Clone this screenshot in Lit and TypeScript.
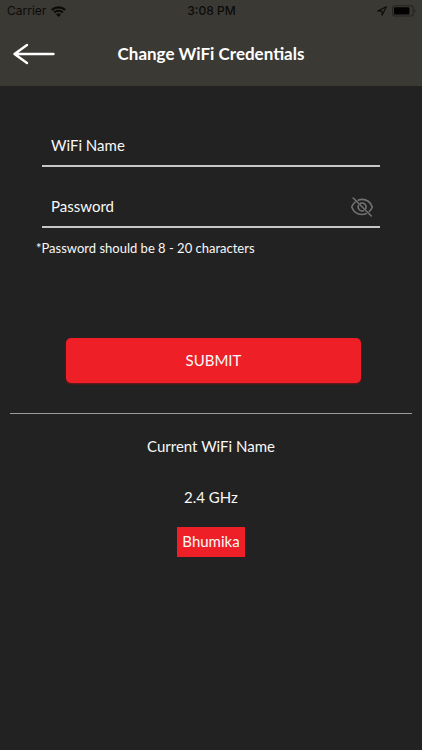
import { LitElement, html, css } from "lit";
import { customElement, state } from "lit/decorators.js";

@customElement("status-bar")
class StatusBar extends LitElement {
  static styles = css`
    :host {
      display: grid;
      grid-template-columns: 1fr auto 1fr;
      align-items: center;
      height: 22px;
      padding: 0 6px 0 7px;
      color: #0b0b0a;
      font: 12px/22px Inter, "Liberation Sans", sans-serif;
    }
    .left,
    .right {
      display: flex;
      align-items: center;
      gap: 5px;
    }
    .right {
      justify-content: flex-end;
    }
    .time {
      font-weight: 500;
    }
    svg {
      display: block;
    }
  `;

  render() {
    return html`
      <div class="left">
        <span>Carrier</span>
        <svg width="15" height="11" viewBox="0 0 15 11" fill="none" stroke="currentColor" stroke-width="2.2" aria-hidden="true">
          <path d="M0.8 4A9.6 9.6 0 0 1 14.2 4" />
          <path d="M3.2 6.5A6.1 6.1 0 0 1 11.8 6.5" />
          <path d="M7.5 11 5.1 8.5A3.4 3.4 0 0 1 9.9 8.5Z" fill="currentColor" stroke="none" />
        </svg>
      </div>
      <span class="time">3:08 PM</span>
      <div class="right">
        <svg width="10" height="10" viewBox="0 0 10 10" fill="none" stroke="currentColor" stroke-width="1.1" stroke-linejoin="round" aria-hidden="true">
          <path d="M9.3 0.7 0.7 4.9 4.9 5.1 5.1 9.3Z" />
        </svg>
        <svg width="24" height="12" viewBox="0 0 24 12" aria-hidden="true">
          <rect x="0.6" y="0.8" width="20.6" height="10.2" rx="2.6" fill="none" stroke="#252421" stroke-width="1.1" />
          <rect x="2" y="2.2" width="15.4" height="7.4" rx="1.2" fill="#020202" />
          <path d="M22.3 4.2Q23.6 4.8 23.6 6T22.3 7.8Z" fill="#252421" />
        </svg>
      </div>
    `;
  }
}

@customElement("app-root")
class AppRoot extends LitElement {
  @state() private passwordShown = false;

  static styles = css`
    :host {
      display: block;
      min-height: 100vh;
      background: #222222;
      color: #f8f8f8;
      font: 15px/20px Lato, "Noto Sans", sans-serif;
    }
    header {
      background: #3b3934;
      height: 86px;
    }
    .bar {
      display: grid;
      grid-template-columns: 44px 1fr 44px;
      align-items: center;
      height: 64px;
      padding: 0 12px;
    }
    h1 {
      margin: 0;
      font-size: 17px;
      line-height: 24px;
      font-weight: 700;
      text-align: center;
      color: #ffffff;
    }
    button {
      border: 0;
      padding: 0;
      background: none;
      color: inherit;
      font: inherit;
      cursor: pointer;
    }
    svg {
      display: block;
    }
    form {
      padding: 40px 42px 30px;
    }
    .field {
      display: flex;
      align-items: center;
      height: 39px;
      border-bottom: 2px solid #c8c6c8;
      padding: 0 6px 0 9px;
    }
    .field + .field {
      margin-top: 20px;
    }
    input {
      flex: 1;
      min-width: 0;
      border: 0;
      padding: 0 0 2px;
      outline: 0;
      background: none;
      color: inherit;
      font: inherit;
    }
    input::placeholder {
      color: inherit;
      opacity: 1;
    }
    .eye {
      color: #727272;
    }
    .hint {
      margin: 10px -6px 0;
      font-size: 13px;
    }
    .submit {
      display: block;
      width: calc(100% - 43px);
      height: 45px;
      margin: 80px 19px 0 24px;
      padding-bottom: 2px;
      border-radius: 5px;
      background: #ef1f27;
      box-shadow: 0 1px 2px #7a1418;
    }
    .current {
      display: flex;
      flex-direction: column;
      align-items: center;
      margin: 0 10px;
      padding-top: 22px;
      border-top: 1px solid #9a9a9a;
    }
    h2,
    .band {
      margin: 0;
      font: inherit;
    }
    .band {
      margin-top: 31px;
    }
    .network {
      margin-top: 20px;
      padding: 4px 5px 6px;
      background: #ef1f27;
    }
  `;

  private togglePassword() {
    this.passwordShown = !this.passwordShown;
  }

  render() {
    return html`
      <header>
        <status-bar></status-bar>
        <div class="bar">
          <button type="button" aria-label="Back">
            <svg width="44" height="22" viewBox="0 0 44 22" fill="none" stroke="#ffffff" stroke-width="2.4" stroke-linecap="round" stroke-linejoin="round">
              <path d="M41.5 11H2.5M15 2 2.5 11 15 20" />
            </svg>
          </button>
          <h1>Change WiFi Credentials</h1>
        </div>
      </header>
      <main>
        <form @submit=${(e: Event) => e.preventDefault()}>
          <div class="field">
            <input type="text" aria-label="WiFi Name" placeholder="WiFi Name" />
          </div>
          <div class="field">
            <input
              type=${this.passwordShown ? "text" : "password"}
              aria-label="Password"
              aria-describedby="hint"
              placeholder="Password"
            />
            <button class="eye" type="button" aria-label="Show password" @click=${this.togglePassword}>
              <svg width="24" height="20" viewBox="0 0 24 20" fill="none" stroke="currentColor" stroke-width="1.6" stroke-linecap="round">
                <path d="M8.2 3.2Q10 2.4 12 2.4C17 2.4 20.6 5.6 22.3 10Q21.3 12.6 19.3 14.5M16.2 16.5Q14.2 17.5 12 17.5C7 17.5 3.4 14.4 1.7 10Q2.9 7 5.2 5" />
                <path d="M10.6 6.3A4 4 0 0 1 15.8 11.4M13.4 13.7A4 4 0 0 1 8.3 8.6" />
                <path d="M3.2 1 21.3 19" />
              </svg>
            </button>
          </div>
          <p class="hint" id="hint">*Password should be 8 - 20 characters</p>
          <button class="submit" type="submit">SUBMIT</button>
        </form>
        <section class="current">
          <h2>Current WiFi Name</h2>
          <p class="band">2.4 GHz</p>
          <span class="network">Bhumika</span>
        </section>
      </main>
    `;
  }
}
